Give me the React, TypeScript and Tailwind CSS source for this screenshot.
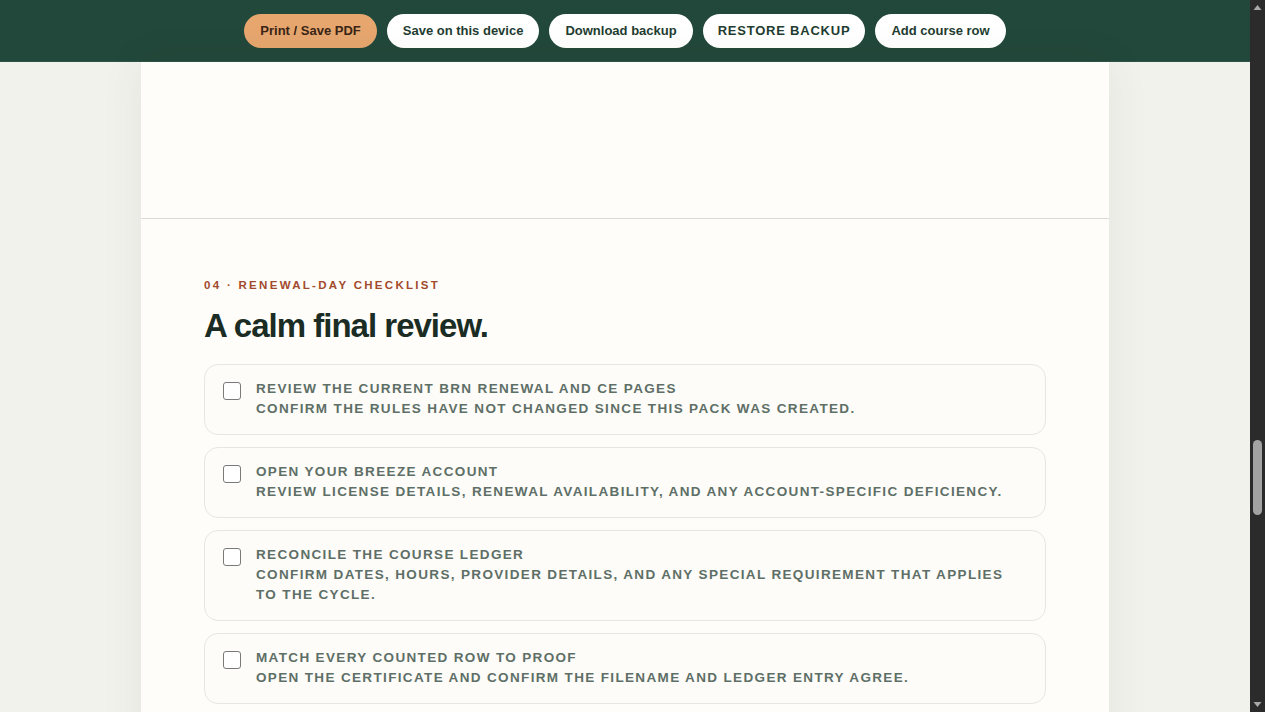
import React from "react";

const items = [
  {
    title: "Review the current BRN renewal and CE pages",
    desc: "Confirm the rules have not changed since this pack was created.",
  },
  {
    title: "Open your Breeze account",
    desc: "Review license details, renewal availability, and any account-specific deficiency.",
  },
  {
    title: "Reconcile the course ledger",
    desc: "Confirm dates, hours, provider details, and any special requirement that applies to the cycle.",
  },
  {
    title: "Match every counted row to proof",
    desc: "Open the certificate and confirm the filename and ledger entry agree.",
  },
];

function Scrollbar() {
  return (
    <div className="flex w-[15px] shrink-0 flex-col items-center bg-[#2b2b2b]">
      <svg width="15" height="15" viewBox="0 0 15 15" className="shrink-0">
        <path d="M3.5 10 L7.5 5 L11.5 10 Z" fill="#a8a8a8" />
      </svg>
      <div className="flex w-full flex-1 flex-col items-center pt-[425px]">
        <div className="h-[75px] w-[9px] rounded-full bg-[#a3a3a3]" />
      </div>
      <svg width="15" height="15" viewBox="0 0 15 15" className="shrink-0">
        <path d="M3.5 5 L11.5 5 L7.5 10 Z" fill="#a8a8a8" />
      </svg>
    </div>
  );
}

export default function App() {
  return (
    <div
      className="flex h-screen overflow-hidden bg-[#f2f2ed]"
      style={{ fontFamily: '"Liberation Sans", Arial, sans-serif' }}
    >
      <div className="flex min-w-0 flex-1 flex-col overflow-hidden">
        <header className="flex h-[62px] shrink-0 items-center justify-center gap-[10px] border-b border-[#2d5446] bg-[#22483b]">
          <button className="h-[34px] rounded-full bg-[#e6a66e] px-4 text-[13px] font-bold text-[#3b2516]">
            Print / Save PDF
          </button>
          <button className="h-[34px] rounded-full bg-white px-4 text-[13px] font-bold text-[#1f3d31]">
            Save on this device
          </button>
          <button className="h-[34px] rounded-full bg-white px-4 text-[13px] font-bold text-[#1f3d31]">
            Download backup
          </button>
          <button className="h-[34px] rounded-full bg-white px-[15px] text-[13px] font-bold uppercase tracking-[0.06em] text-[#1f3d31]">
            Restore backup
          </button>
          <button className="h-[34px] rounded-full bg-white px-4 text-[13px] font-bold text-[#1f3d31]">
            Add course row
          </button>
        </header>

        <main className="mx-auto w-[968px] flex-1 shrink-0 bg-[#fefdf9] shadow-[0_0_40px_rgba(60,60,40,0.08)]">
          <section className="h-[157px] border-b border-[#dcdcd5]" />
          <section className="px-[63px] pb-[120px] pt-[58px]">
            <p className="text-[11.5px] font-bold uppercase tracking-[0.2em] text-[#a24a2c]">
              04 · Renewal-day checklist
            </p>
            <h2 className="mt-[12px] text-[33px] font-bold leading-[40px] tracking-[-0.03em] text-[#1a2c23]">
              A calm final review.
            </h2>
            <ul className="mt-[18px] flex w-[842px] flex-col gap-3">
              {items.map((it) => (
                <li
                  key={it.title}
                  className="flex gap-[15px] rounded-[14px] border border-[#e8e6df] bg-[#fdfcf8] pb-[15px] pl-[18px] pr-[30px] pt-[14px]"
                >
                  <input
                    type="checkbox"
                    className="mt-[3px] h-[18px] w-[18px] shrink-0 appearance-none rounded-[3px] border border-[#7a7a7a] bg-white"
                  />
                  <div className="text-[13.5px] font-bold uppercase leading-[20px] tracking-[0.1em] text-[#5e6f67]">
                    <div>{it.title}</div>
                    <div>{it.desc}</div>
                  </div>
                </li>
              ))}
            </ul>
          </section>
        </main>
      </div>
      <Scrollbar />
    </div>
  );
}
